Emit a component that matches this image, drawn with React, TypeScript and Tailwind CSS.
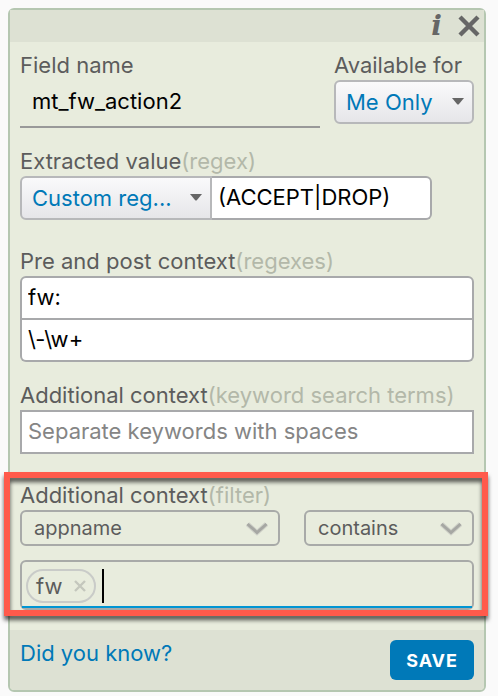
import { useState } from 'react';
import type { ReactNode } from 'react';

function Label({ htmlFor, hint, children }: { htmlFor: string; hint?: string; children: ReactNode }) {
  return (
    <label htmlFor={htmlFor} className="block leading-[30px] whitespace-nowrap text-[#5c5c5c]">
      {children}
      {hint && <span className="text-[#b3b8a9]">({hint})</span>}
    </label>
  );
}

function Caret() {
  return (
    <svg viewBox="0 0 12 7" className="pointer-events-none absolute top-[18px] right-2.5 h-[7px] w-3" aria-hidden="true">
      <path d="M0 0h12L6.8 6.2q-.8.8-1.6 0z" fill="#666" />
    </svg>
  );
}

function Chevron() {
  return (
    <svg viewBox="0 0 22 14" className="pointer-events-none absolute top-3 right-3 h-3.5 w-[22px]" aria-hidden="true">
      <path d="M1.5 2 11 10.5 20.5 2" fill="none" stroke="#d0d2c9" strokeWidth="5" />
      <path d="M1.5 2 11 10.5 20.5 2" fill="none" stroke="#a6a7a3" strokeWidth="3" />
    </svg>
  );
}

const gradientSelect =
  'h-11 w-full appearance-none border-2 border-[#b7b8ba] bg-linear-to-b from-[#fafafb] to-[#e6e6e9] pl-2.5 pr-6 text-[#0079b8] outline-none';
const outlineSelect =
  'h-9 w-full appearance-none rounded-md border-2 border-[#a8aaa8] bg-transparent pl-3 pr-9 text-[20px] text-[#5c5c5c] outline-none';

export default function App() {
  const [name, setName] = useState('mt_fw_action2');
  const [regex, setRegex] = useState('(ACCEPT|DROP)');
  const [pre, setPre] = useState('fw:');
  const [post, setPost] = useState('\\-\\w+');
  const [keywords, setKeywords] = useState('');
  const [tokens, setTokens] = useState(['fw']);

  return (
    <div className="min-h-screen bg-[#fafafa] pt-2 pr-3 pb-1 pl-2 font-['Inter',sans-serif] text-[22px]">
      <form
        onSubmit={e => e.preventDefault()}
        className="rounded-md border-2 border-[#b5c7b1] bg-[#e8ecdd]"
      >
        <header className="flex h-8 items-center justify-end gap-4 bg-[#dde1d3] pr-1 text-[#666]">
          <button
            type="button"
            aria-label="Info"
            className="font-['DejaVu_Serif',serif] text-[28px] leading-7 font-bold italic"
          >
            i
          </button>
          <button type="button" aria-label="Close">
            <svg viewBox="0 0 22 22" className="h-[22px] w-[22px]" aria-hidden="true">
              <path d="M2 2 20 20M20 2 2 20" stroke="currentColor" strokeWidth="4.4" />
            </svg>
          </button>
        </header>

        <div className="px-2.5 pt-2 pb-5">
          <div className="flex gap-3.5">
            <div className="min-w-0 flex-1">
              <Label htmlFor="name">Field name</Label>
              <input id="name" value={name} onChange={e => setName(e.target.value)}
                className="h-12 w-full border-b-2 border-[#999] bg-transparent px-3 pb-1 text-black outline-none" />
            </div>
            <div className="w-[140px]">
              <Label htmlFor="scope">Available for</Label>
              <div className="relative">
                <select id="scope" className={`${gradientSelect} rounded-md`}>
                  <option>Me Only</option>
                  <option>All Users</option>
                </select>
                <Caret />
              </div>
            </div>
          </div>

          <div className="mt-[18px]">
            <Label htmlFor="regex" hint="regex">Extracted value</Label>
            <div className="flex">
              <div className="relative w-[192px]">
                <select aria-label="Value type" className={`${gradientSelect} rounded-l-md`}>
                  <option>Custom reg...</option>
                  <option>Integer</option>
                </select>
                <Caret />
              </div>
              <input id="regex" value={regex} onChange={e => setRegex(e.target.value)}
                className="mr-[42px] h-11 min-w-0 flex-1 rounded-r-md border-2 border-l-0 border-[#a8a9ab] bg-white px-1.5 pb-0.5 text-black outline-none" />
            </div>
          </div>

          <div className="mt-[26px]">
            <Label htmlFor="pre" hint="regexes">Pre and post context</Label>
            <input id="pre" value={pre} onChange={e => setPre(e.target.value)}
              className="block h-11 w-full rounded-t-md border-2 border-[#a8a9ab] bg-white px-1.5 pb-0.5 text-black outline-none" />
            <input aria-label="Post context" value={post} onChange={e => setPost(e.target.value)}
              className="block h-[42px] w-full rounded-b-md border-2 border-t-0 border-[#a8a9ab] bg-white px-1.5 pb-0.5 text-black outline-none" />
          </div>

          <div className="mt-[18px]">
            <Label htmlFor="keywords" hint="keyword search terms">Additional context</Label>
            <input id="keywords" value={keywords} onChange={e => setKeywords(e.target.value)}
              placeholder="Separate keywords with spaces"
              className="block h-11 w-full border-2 border-[#a8a9ab] bg-white px-1.5 pb-0.5 text-black outline-none placeholder:text-[#858585]" />
          </div>

          <div className="relative mt-[26px]">
            <Label htmlFor="filter" hint="filter">Additional context</Label>
            <div className="flex gap-6">
              <div className="relative flex-1">
                <select id="filter" className={outlineSelect}>
                  <option>appname</option>
                  <option>hostname</option>
                </select>
                <Chevron />
              </div>
              <div className="relative w-[170px]">
                <select aria-label="Operator" className={outlineSelect}>
                  <option>contains</option>
                  <option>does not contain</option>
                </select>
                <Chevron />
              </div>
            </div>
            <div className="mt-3.5 rounded-md border-2 border-[#a8aaa8]">
              <div className="flex h-[46px] items-center gap-1.5 border-b-2 border-[#0095d3] pt-1 pl-1">
                {tokens.map(t => (
                  <span key={t} className="flex h-[34px] items-center gap-3 rounded-full border-2 border-[#c9cbc8] px-2 text-[#5c5c5c]">
                    {t}
                    <button type="button" aria-label={`Remove ${t}`} onClick={() => setTokens(tokens.filter(x => x !== t))}>
                      <svg viewBox="0 0 12 12" className="h-3 w-3" aria-hidden="true">
                        <path d="M1 1 11 11M11 1 1 11" stroke="#c4c7bd" strokeWidth="2.4" />
                      </svg>
                    </button>
                  </span>
                ))}
                <span className="h-[34px] w-0.5 bg-black" />
                <input aria-label="Filter value" className="min-w-0 flex-1 bg-transparent outline-none" />
              </div>
            </div>
            {/* highlight frame around the filter group */}
            <div className="pointer-events-none absolute -top-2 -right-3.5 -bottom-1.5 -left-4 border-[6px] border-[#ff5a4b] drop-shadow-[0_4px_2px_rgba(0,0,0,0.65)]" />
          </div>
        </div>

        <footer className="flex h-[60px] items-start justify-between rounded-b-sm bg-[#dde1d3] p-2.5">
          <a href="#tips" className="leading-[26px] text-[#0079b8]">Did you know?</a>
          <button type="submit" className="h-10 w-[84px] rounded-md bg-[#0079b8] text-[18px] font-bold tracking-wider text-white">
            SAVE
          </button>
        </footer>
      </form>
    </div>
  );
}
